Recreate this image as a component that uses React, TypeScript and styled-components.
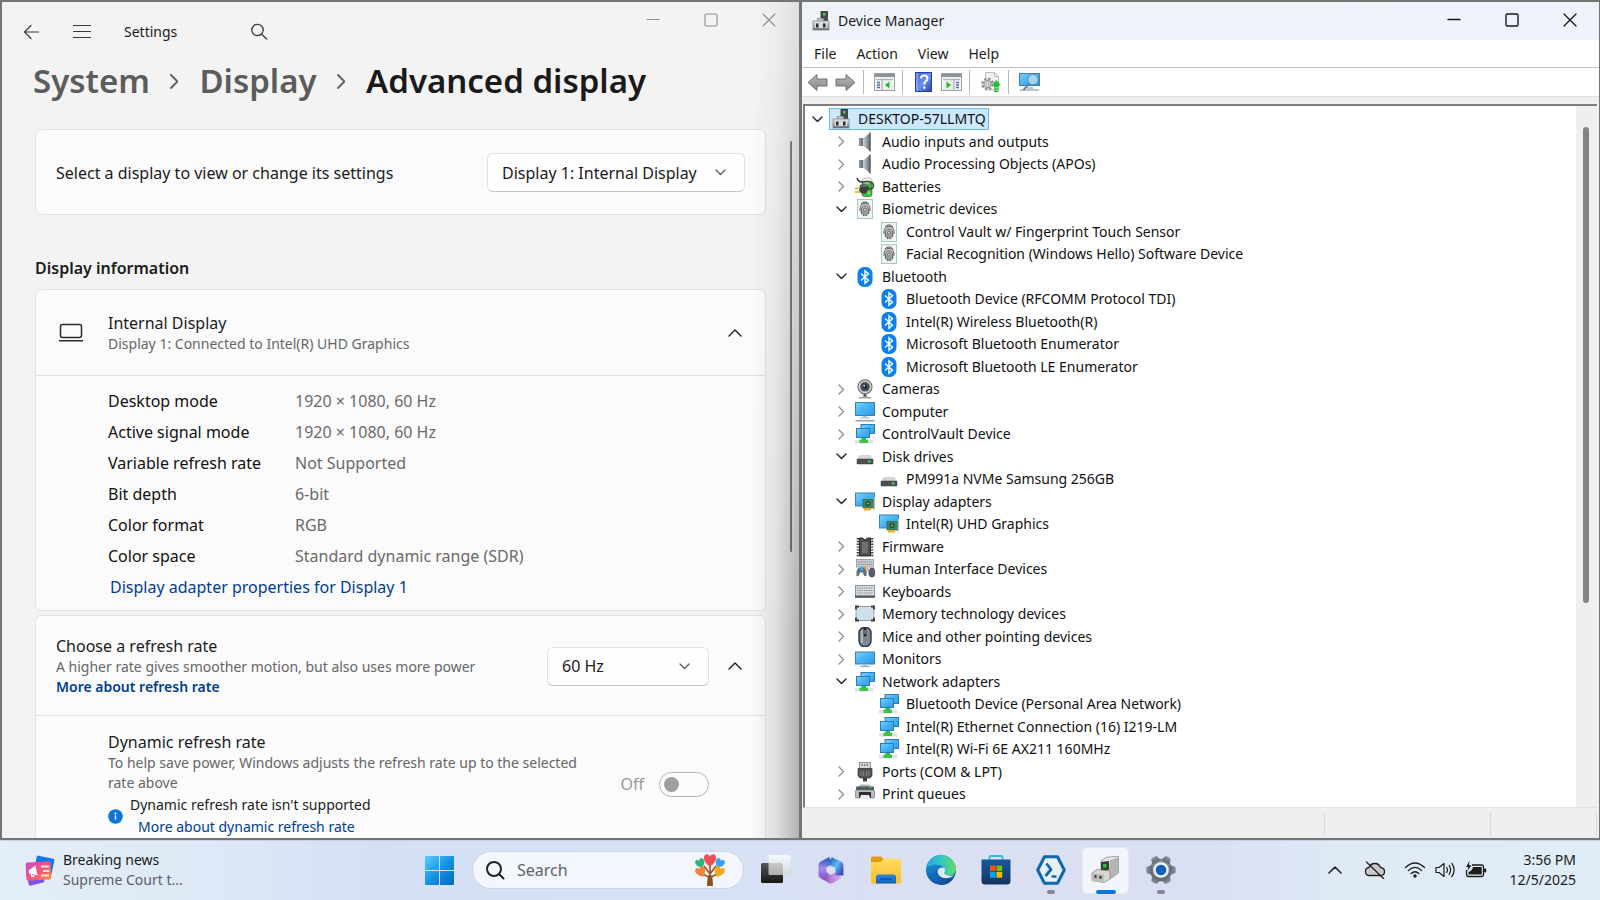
import React from 'react';
import styled, { createGlobalStyle } from 'styled-components';

const GlobalStyle = createGlobalStyle`
  *, *::before, *::after { box-sizing: border-box; }
  html, body { margin: 0; padding: 0; }
  body {
    font-family: "Noto Sans", "Open Sans", sans-serif;
    font-size: 14px;
    line-height: 20px;
    color: #1b1b1b;
  }
  button, input, select { font: inherit; color: inherit; margin: 0; padding: 0; }
  button { border: 0; background: none; }
  svg { display: block; flex: none; }
  h1, h2, p, ul, ol { margin: 0; padding: 0; font: inherit; list-style: none; }
`;

/* ---------- Desktop ---------- */

const Screen = styled.div`
  display: flex;
  flex-direction: column;
  height: 100vh;
  overflow: hidden;
`;

const Desktop = styled.main`
  flex: 1;
  min-height: 0;
  display: grid;
  grid-template-columns: minmax(0, 1fr) minmax(0, 1fr);
`;

const Window = styled.section`
  position: relative;
  display: flex;
  flex-direction: column;
  min-height: 0;
  overflow: hidden;
  border: 2px solid #747474;
  border-right-width: 1px;
`;

const SettingsWindow = styled(Window)`
  background: #f3f3f3;
  &::after {
    content: "";
    position: absolute;
    inset: 0 0 0 auto;
    width: 48px;
    pointer-events: none;
    background: linear-gradient(to left, rgba(0, 0, 0, 0.26), rgba(0, 0, 0, 0.07) 50%, transparent);
    mask-image: linear-gradient(to bottom, rgba(0, 0, 0, 0.3), #000 75%);
  }
`;

const ManagerWindow = styled(Window)`
  background: #efefef;
`;

const WindowButtons = styled.div`
  display: flex;
  align-self: flex-start;
  margin-left: auto;
`;

const WindowButton = styled.button<{ $dim?: boolean }>`
  width: 58px;
  height: 36px;
  display: grid;
  place-items: center;
  color: ${(p) => (p.$dim ? '#8e8e8e' : '#1a1a1a')};
`;

/* ---------- Settings ---------- */

const NavBar = styled.header`
  display: flex;
  align-items: center;
  height: 59px;
  padding: 0 1px 0 20px;
`;

const NavButton = styled.button`
  width: 20px;
  height: 20px;
  margin-right: 30px;
  color: #3a3a3a;
`;

const AppName = styled.span`
  margin: 0 72px 0 2px;
`;

const Breadcrumb = styled.ol`
  display: flex;
  align-items: center;
  gap: 21px;
  padding: 0 31px 28px;
  font-size: 33px;
  line-height: 40px;
  font-weight: 600;
  white-space: nowrap;
  li { display: flex; align-items: center; gap: 20px; color: #1a1a1a; }
  a { color: #5c5c5c; text-decoration: none; }
  svg { color: #5c5c5c; }
`;

const SettingsBody = styled.div`
  flex: 1;
  min-height: 0;
  display: flex;
`;

const SettingsContent = styled.div`
  flex: 1;
  min-width: 0;
  padding-left: 33px;
`;

const ThinTrack = styled.div`
  width: 33px;
  padding: 12px 0 0 24px;
`;

const ThinThumb = styled.div`
  width: 2px;
  height: 59%;
  border-radius: 1px;
  background: #828282;
`;

const Card = styled.div`
  border: 1px solid #e2e2e2;
  border-radius: 6px;
  background: #fbfbfb;
  margin-bottom: 4px;
`;

const CardHeader = styled.div<{ $height: number; $divided?: boolean }>`
  display: flex;
  align-items: center;
  min-height: ${(p) => p.$height}px;
  padding: 1px 20px 0;
  border-bottom: ${(p) => (p.$divided ? '1px solid #e0e0e0' : '0')};
`;

const SectionTitle = styled.h2`
  margin: 42px 0 10px;
  font-size: 16px;
  line-height: 22px;
  font-weight: 600;
`;

const Grow = styled.div`
  flex: 1;
  min-width: 0;
`;

const Title = styled.div`
  font-size: 16px;
  line-height: 22px;
`;

const TitleLabel = styled.label`
  display: block;
  font-size: 16px;
  line-height: 22px;
`;

const Sub = styled.p`
  color: #666;
`;

const HeaderIcon = styled.div`
  width: 52px;
  padding-left: 2px;
`;

const ExpandButton = styled.button`
  width: 20px;
  height: 20px;
  display: grid;
  place-items: center;
`;

const SelectBox = styled.div<{ $width: number; $gapRight?: number }>`
  position: relative;
  width: ${(p) => p.$width}px;
  margin-right: ${(p) => p.$gapRight ?? 0}px;
  svg {
    position: absolute;
    right: 19px;
    top: 16px;
    pointer-events: none;
    color: #5a5a5a;
  }
`;

const Select = styled.select`
  appearance: none;
  width: 100%;
  height: 39px;
  padding: 0 14px;
  font-size: 16px;
  border: 1px solid #e2e2e2;
  border-bottom-color: #c6c6c6;
  border-radius: 6px;
  background: #fefefe;
`;

const InfoBody = styled.div`
  padding: 9px 20px 7px 72px;
`;

const InfoTable = styled.table`
  border-collapse: collapse;
  font-size: 16px;
  th, td { height: 31px; padding: 0; text-align: left; font-weight: 400; }
  th { width: 187px; color: #111; }
  td { color: #6a6a6a; }
`;

const Link = styled.a<{ $strong?: boolean }>`
  color: #003e92;
  text-decoration: none;
  font-weight: ${(p) => (p.$strong ? 600 : 400)};
`;

const AdapterLink = styled(Link)`
  display: block;
  padding-left: 2px;
  font-size: 16px;
  line-height: 32px;
`;

const DynamicRow = styled.div`
  display: flex;
  align-items: center;
  gap: 24px;
  padding: 15px 56px 20px 72px;
`;

const Notice = styled.div`
  display: flex;
  align-items: center;
  gap: 7px;
  margin-top: 2px;
  ${Link} { display: block; margin-top: 2px; padding-left: 8px; }
`;

const ToggleLabel = styled.label`
  display: flex;
  align-items: center;
  gap: 15px;
  font-size: 16px;
  color: #999;
`;

const Toggle = styled.input`
  appearance: none;
  width: 50px;
  height: 25px;
  padding: 4px;
  border: 1px solid #b4b4b4;
  border-radius: 13px;
  background: #fcfcfc;
  &::before {
    content: "";
    display: block;
    width: 15px;
    height: 15px;
    border-radius: 50%;
    background: #9f9f9f;
  }
`;

/* ---------- Device Manager ---------- */

const ManagerTitle = styled.header`
  display: flex;
  align-items: center;
  gap: 7px;
  height: 38px;
  padding-left: 9px;
  background: linear-gradient(to right, #edf3f9, #eef3fb);
`;

const MenuBar = styled.nav`
  display: flex;
  height: 28px;
  padding: 0 4px 0 2px;
  background: #fff;
  border-bottom: 1px solid #bcc2c8;
  button { padding: 0 10px; line-height: 24px; }
`;

const ToolBar = styled.div`
  display: flex;
  align-items: center;
  gap: 3px;
  height: 29px;
  margin-bottom: 7px;
  padding-left: 3px;
  background: #fff;
  border-bottom: 1px solid #dedede;
`;

const ToolButton = styled.button`
  width: 25px;
  height: 24px;
  display: grid;
  place-items: center;
`;

const ToolDivider = styled.span`
  width: 1px;
  height: 24px;
  margin: 0 5px 0 2px;
  background: #b8b8b8;
`;

const TreePane = styled.div`
  flex: 1;
  min-height: 0;
  display: flex;
  overflow: hidden;
  margin: 0 2px 0 1px;
  background: #fff;
  border-left: 2px solid #7d7d7d;
  border-top: 2px solid #7d7d7d;
  border-bottom: 1px solid #e2e2e2;
`;

const Tree = styled.ul`
  flex: 1;
  padding: 2px 0 0 7px;
`;

const TreeRow = styled.li<{ $level: number }>`
  display: flex;
  align-items: center;
  height: 22px;
  padding-left: ${(p) => p.$level * 24}px;
  color: #111;
  &:nth-child(even) { height: 23px; }
`;

const Expander = styled.button`
  width: 11px;
  height: 20px;
  margin-right: 6px;
  display: grid;
  place-items: center;
`;

const ExpanderGap = styled.span`
  width: 17px;
`;

const TreeLabel = styled.span<{ $selected?: boolean }>`
  display: flex;
  align-items: center;
  gap: 7px;
  height: 22px;
  padding: 0 2px 0 1px;
  white-space: nowrap;
  border: 1px solid ${(p) => (p.$selected ? '#6cb8f2' : 'transparent')};
  background: ${(p) => (p.$selected ? '#cce8ff' : 'none')};
`;

const Gutter = styled.div`
  width: 21px;
  padding: 21px 0 0 7px;
  background: #efefef;
`;

const Thumb = styled.div`
  width: 6px;
  height: 70%;
  border-radius: 3px;
  background: #858585;
`;

const StatusBar = styled.footer`
  display: flex;
  justify-content: flex-end;
  height: 30px;
  padding: 4px 2px 2px 0;
`;

const StatusCell = styled.div<{ $width: number }>`
  width: ${(p) => p.$width}px;
  border-left: 1px solid #dadada;
`;

/* ---------- Taskbar ---------- */

const TaskBar = styled.footer`
  height: 60px;
  display: grid;
  grid-template-columns: 1fr auto 1fr;
  align-items: center;
  box-shadow: inset 0 1px #c9d1de;
  background: linear-gradient(to right, #e3eef7 0%, #dfe9f6 12%, #d5dff5 24%, #d7e1f6 45%, #dadff2 56%, #dadff1 75%, #dfeaf6 84%, #e0ecf6 100%);
`;

const NewsButton = styled.button`
  display: flex;
  align-items: center;
  gap: 8px;
  padding-left: 24px;
  text-align: left;
`;

const Muted = styled.span`
  color: #5d6066;
`;

const Lines = styled.span`
  display: flex;
  flex-direction: column;
`;

const AppStrip = styled.div`
  display: flex;
  align-items: center;
`;

const AppButton = styled.button`
  position: relative;
  width: 55px;
  height: 48px;
  display: grid;
  place-items: center;
`;

const ActiveTile = styled.span`
  display: grid;
  place-items: center;
  width: 47px;
  height: 47px;
  border-radius: 5px;
  background: #f2f5fc;
  border: 1px solid #e6e9f3;
`;

const Indicator = styled.span<{ $active?: boolean }>`
  position: absolute;
  bottom: 0;
  left: 50%;
  transform: translateX(-50%);
  width: ${(p) => (p.$active ? 20 : 8)}px;
  height: 4px;
  border-radius: 2px;
  background: ${(p) => (p.$active ? '#0a78d4' : '#85878c')};
`;

const SearchBox = styled.label`
  display: flex;
  align-items: center;
  width: 272px;
  height: 38px;
  margin: 0 4px 0 5px;
  padding: 0 18px 0 12px;
  border: 1px solid #cbd3e6;
  border-radius: 19px;
  background: #f3f7fd;
  input {
    flex: 1;
    min-width: 0;
    margin-left: 12px;
    border: 0;
    outline: 0;
    background: none;
    font-size: 16px;
  }
  input::placeholder { color: #5f6368; opacity: 1; }
`;

const Tray = styled.div`
  display: flex;
  align-items: center;
  justify-content: flex-end;
  padding-right: 24px;
`;

const TrayButton = styled.button<{ $gap: number }>`
  margin-right: ${(p) => p.$gap}px;
`;

const Clock = styled.button`
  text-align: right;
  width: 89px;
`;

/* ---------- Line glyphs ---------- */

const Chevron = ({ dir, size, stroke = 1.4, color = 'currentColor' }: { dir: 'up' | 'down' | 'right'; size: number; stroke?: number; color?: string }) => {
  const h = size / 2;
  const box = dir === 'right' ? [h + 2, size + 2] : [size + 2, h + 2];
  const pts =
    dir === 'right'
      ? `1,1 ${h + 1},${h + 1} 1,${size + 1}`
      : dir === 'down'
        ? `1,1 ${h + 1},${h + 1} ${size + 1},1`
        : `1,${h + 1} ${h + 1},1 ${size + 1},${h + 1}`;
  return (
    <svg width={box[0]} height={box[1]} viewBox={`0 0 ${box[0]} ${box[1]}`} fill="none" stroke={color} strokeWidth={stroke} strokeLinecap="round" strokeLinejoin="round">
      <polyline points={pts} />
    </svg>
  );
};

const WinGlyph = ({ kind, stroke = 1 }: { kind: 'min' | 'max' | 'close'; stroke?: number }) => (
  <svg width="14" height="14" viewBox="0 0 14 14" fill="none" stroke="currentColor" strokeWidth={stroke} strokeLinecap="round">
    {kind === 'min' && <path d="M1 6.5H13" />}
    {kind === 'max' && <rect x="1" y="1" width="12" height="12" rx="1.2" />}
    {kind === 'close' && <path d="M1 1L13 13M13 1L1 13" />}
  </svg>
);

const WindowControls = ({ dim }: { dim?: boolean }) => (
  <WindowButtons>
    {(['min', 'max', 'close'] as const).map((k) => (
      <WindowButton key={k} $dim={dim} aria-label={k}>
        <WinGlyph kind={k} stroke={dim ? 1.1 : 1.4} />
      </WindowButton>
    ))}
  </WindowButtons>
);

/* ---------- Shared gradients ---------- */

const DefsSvg = styled.svg`
  position: absolute;
  width: 0;
  height: 0;
`;

const Grad = ({ id, stops, x2 = 0, y2 = 1 }: { id: string; stops: string[]; x2?: number; y2?: number }) => (
  <linearGradient id={id} x1="0" y1="0" x2={x2} y2={y2}>
    {stops.map((s, i) => (
      <stop key={i} offset={i / (stops.length - 1)} stopColor={s} />
    ))}
  </linearGradient>
);

const Defs = () => (
  <DefsSvg aria-hidden="true">
    <defs>
      <Grad id="screen" stops={['#7fd0fb', '#45b2f3', '#2b9be6']} x2={1} />
      <Grad id="metal" stops={['#e8eaec', '#7f858b']} />
      <Grad id="cone" stops={['#d2d6da', '#5d646b']} x2={1} y2={0} />
      <Grad id="arrow" stops={['#b5b5b5', '#8a8a8a']} />
      <Grad id="helpBlue" stops={['#3d62d0', '#6f8df0', '#2748b4']} x2={1} />
      <Grad id="win" stops={['#55d3fb', '#1593e6', '#0067c4']} x2={1} />
      <Grad id="news" stops={['#c14fd6', '#fb4f77', '#ff8a3c']} x2={1} />
      <Grad id="newsBlue" stops={['#0f7be8', '#2a6ce0']} />
      <Grad id="newsPurple" stops={['#2f7fe8', '#8c49ee']} />
      <Grad id="viewDark" stops={['#555', '#161616']} />
      <Grad id="viewLight" stops={['#fff', '#d8d8d8']} />
      <Grad id="mBlue" stops={['#2a6fc4', '#5cbcf5', '#3c4fc0']} x2={1} />
      <Grad id="mViolet" stops={['#3f63c4', '#a98be8', '#8d62d6']} />
      <Grad id="mPink" stops={['#7b4aa8', '#b57fd8', '#d9a4ee']} x2={1} y2={0} />
      <Grad id="folder" stops={['#ffdd63', '#fbbc24']} />
      <Grad id="folderBlue" stops={['#2a86df', '#0c62b8']} />
      <Grad id="edgeTop" stops={['#2aa9e6', '#35c6c0', '#63dd5c']} x2={1} y2={0} />
      <Grad id="edgeSide" stops={['#1b9de2', '#0c59a4']} />
      <Grad id="edgeLow" stops={['#1278cc', '#123f86']} x2={1} />
      <Grad id="store" stops={['#155a9c', '#16345f']} />
      <Grad id="gear" stops={['#8b959e', '#5f6972']} />
      <Grad id="usb" stops={['#f2f2ef', '#a4a4a0']} />
    </defs>
  </DefsSvg>
);

/* ---------- Device icons, 20 by 20 ---------- */

type IconName =
  | 'pc' | 'speaker' | 'battery' | 'finger' | 'bluetooth' | 'camera' | 'computer' | 'network' | 'disk'
  | 'adapter' | 'firmware' | 'hid' | 'keyboard' | 'memory' | 'mouse' | 'monitor' | 'port' | 'printer' | 'cpu';

const shapes: Record<IconName, React.ReactNode> = {
  pc: (
    <>
      <rect x="10" y="0.5" width="6.5" height="11" fill="#484c4d" stroke="#303334" strokeWidth=".8" />
      <rect x="12" y="2" width="2.5" height="2.5" fill="#41d445" />
      <rect x="6.5" y="7.5" width="6" height="4" fill="#c6c8ca" stroke="#83878a" strokeWidth=".7" />
      <rect x="2" y="10" width="16" height="9" fill="url(#metal)" stroke="#84888c" strokeWidth=".8" />
      <rect x="4" y="12" width="12" height="5" fill="#d9dbdd" />
      <rect x="5" y="12.5" width="2.5" height="4" fill="#2e2e2e" />
      <rect x="12" y="12.5" width="2.5" height="4" fill="#2e2e2e" />
      <rect x="2" y="17.5" width="16" height="1.5" fill="#70757a" />
    </>
  ),
  speaker: (
    <>
      <path d="M4 6H9V14H4Z" fill="#6f777e" />
      <path d="M8 6.500L15.500 .5V19.500L8 13.500Z" fill="url(#cone)" />
      <path d="M15 .5V19.5" stroke="#4e555b" strokeWidth="1" />
      <path d="M5 6V14" stroke="#a4abb1" strokeWidth="1" />
    </>
  ),
  battery: (
    <>
      <rect x="7" y="2.5" width="10" height="17" rx="2.5" fill="#3fba3f" stroke="#2b7a2e" strokeWidth=".7" />
      <ellipse cx="12" cy="3.6" rx="5" ry="2.8" fill="#eeeeee" stroke="#9a9a9a" strokeWidth=".6" />
      <path d="M2 1Q3 5 7 5Q17 3 18.5 8Q19 12 14 12" fill="none" stroke="#3c3c3c" strokeWidth="1.5" />
      <path d="M5 8Q11 6 14 10Q14 15 9 17Q5 16 4 14Z" fill="#3e4144" />
      <path d="M6 9.5Q9 8 12 9" stroke="#8d9194" fill="none" />
      <path d="M0 11.5H5M0 15H5" stroke="#e0a92a" strokeWidth="1.6" />
      <path d="M13 14Q15 16 14 18" stroke="#8be47c" strokeWidth="1.5" fill="none" />
    </>
  ),
  finger: (
    <>
      <rect x="2.5" y=".5" width="15" height="19" fill="#f2f4f3" stroke="#a3cbbd" />
      <ellipse cx="10" cy="10" rx="5" ry="7.500" fill="#cfd1d1" />
      <g fill="none" stroke="#5c6061" strokeWidth="1">
        <path d="M6 5Q10 .8 14 5" />
        <path d="M5 12Q4.500 4.500 10 4.500Q15.500 4.500 15 12" />
        <path d="M6.700 15Q5.500 7 10 7Q14.500 7 13.500 15" />
        <path d="M8.500 17Q7 9 10 9Q13 9 11.700 17" />
        <path d="M10 11V17" />
      </g>
    </>
  ),
  bluetooth: (
    <>
      <rect x="2.500" y="0" width="15" height="20" rx="6.500" fill="#0a80f2" />
      <path d="M6 6.500L13.500 13.200L10 16.300V3.700L13.500 6.800L6 13.500" fill="none" stroke="#fff" strokeWidth="1.400" />
    </>
  ),
  camera: (
    <>
      <path d="M10 15V18" stroke="#4c4f52" strokeWidth="3" />
      <path d="M4 19Q10 16.500 16 19Z" fill="#d6d8da" stroke="#8b8e91" strokeWidth=".8" />
      <circle cx="10" cy="7.800" r="7" fill="#d4d6d8" stroke="#77797b" strokeWidth="1.200" />
      <circle cx="10" cy="7.800" r="4.800" fill="#4a4d51" />
      <circle cx="10" cy="7.800" r="2.300" fill="#1f2b4a" />
      <circle cx="9.200" cy="6.800" r="1" fill="#b8c9ec" />
    </>
  ),
  computer: (
    <>
      <rect x=".5" y=".5" width="19" height="13" fill="url(#screen)" stroke="#3981b0" />
      <path d="M8 14H12V15.500H8Z" fill="#b7c3cc" />
      <path d="M5 16H15" stroke="#9fb0bd" strokeWidth="1" />
      <path d="M.5 18.800H19.500" stroke="#8da2b5" strokeWidth="1.500" />
    </>
  ),
  network: (
    <>
      <rect x="6" y=".5" width="13.500" height="9" fill="url(#screen)" stroke="#2c7cb5" />
      <rect x="1.500" y="4.500" width="13" height="9" fill="url(#screen)" stroke="#2c7cb5" />
      <path d="M6.500 14H11V16H6.500Z" fill="#36b145" />
      <path d="M0 16H18V19.500H0Z" fill="#dfe1e2" />
      <path d="M4.500 15.500H13V19H4.500Z" fill="#3dc24a" />
    </>
  ),
  disk: (
    <>
      <path d="M4.500 8H15.500L18 12.500H2Z" fill="#d5d7d8" />
      <rect x="2" y="12" width="16" height="5" rx=".6" fill="#4c5052" stroke="#383b3c" strokeWidth=".5" />
      <rect x="13" y="13.500" width="2.500" height="2" fill="#3fe044" />
    </>
  ),
  adapter: (
    <>
      <rect x=".5" y="1" width="19" height="13" fill="url(#screen)" stroke="#3981b0" />
      <rect x="8" y="7.500" width="11" height="8.500" fill="#3a8a5a" stroke="#236343" strokeWidth=".7" />
      <circle cx="13" cy="11.500" r="2.600" fill="#2b4a45" />
      <circle cx="13" cy="11.500" r="1" fill="#9ab5a8" />
      <path d="M9 16H16V18.500H9Z" fill="#f0a92a" />
      <path d="M19.300 5V18.500" stroke="#bfc3c6" strokeWidth="1.200" />
    </>
  ),
  firmware: (
    <>
      <path d="M4.500 1H7.500L10 3L12.500 1H15.500V19H4.500Z" fill="#4c4f52" stroke="#2a2c2e" />
      <path d="M7 5H13V16H7Z" fill="#6d7174" />
      <path d="M2.800 1V20M17.200 1V20" stroke="#34373a" strokeWidth="2.200" strokeDasharray="1.400 1.400" />
    </>
  ),
  hid: (
    <>
      <rect x="1.500" y=".5" width="17" height="7.500" fill="#c9ced2" stroke="#8d949a" strokeWidth=".8" />
      <path d="M3 3H17M3 5.500H17" stroke="#7c848b" strokeWidth="1" strokeDasharray="1.400 .8" />
      <path d="M1.500 17Q.5 9 5 8.500H9Q12.500 9 11.500 17Q8.500 18 8 13.500H5Q4 18.500 1.500 17Z" fill="#656d75" />
      <circle cx="6.500" cy="10" r="2" fill="#2fa1e8" />
      <path d="M9.500 8L11 10.500" stroke="#e5862c" strokeWidth="2" />
      <path d="M12.500 8.500L14.500 17" stroke="#aeb4b9" strokeWidth="1.600" />
      <rect x="14.500" y="9" width="5" height="9" rx="2.500" fill="#59616a" stroke="#343a40" strokeWidth=".7" />
    </>
  ),
  keyboard: (
    <>
      <rect x=".5" y="3.500" width="19" height="12" fill="#d5d9dc" stroke="#8f979d" />
      <path d="M2 6H18M2 8.500H18M2 11H18" stroke="#8f989f" strokeWidth="1.100" strokeDasharray="1.500 .8" />
      <path d="M0 14.500H20" stroke="#4e565c" strokeWidth="2" />
    </>
  ),
  memory: (
    <>
      <rect x="1" y="2.500" width="18" height="14" fill="#cfdfe9" stroke="#8e9ba4" strokeWidth=".8" />
      <path d="M1 5.500V2.500H4M16 2.500H19V5.500M19 13.500V16.500H16M4 16.500H1V13.500" fill="none" stroke="#363b40" strokeWidth="1.800" />
      <path d="M5 16.500H15M5 2.500H15" stroke="#818d96" strokeWidth="1" strokeDasharray="1 1" />
    </>
  ),
  mouse: (
    <>
      <rect x="4" y=".5" width="12" height="19" rx="5.500" fill="#7c8896" stroke="#2f353b" strokeWidth="1.400" />
      <rect x="6" y="3" width="2" height="13" rx="1" fill="#a9b4c0" />
      <path d="M10 1V9.500" stroke="#22272c" strokeWidth="2.600" />
      <path d="M10 3V7" stroke="#aab3bb" strokeWidth="1" />
    </>
  ),
  monitor: (
    <>
      <rect x=".5" y="3" width="19" height="12" fill="url(#screen)" stroke="#3981b0" />
      <path d="M8 15.500H12V17H8Z" fill="#b7c3cc" />
      <path d="M5 17.500H15" stroke="#9fb0bd" strokeWidth="1.200" />
    </>
  ),
  port: (
    <>
      <rect x="4.500" y=".5" width="11" height="6" fill="#d4d6d8" stroke="#85898c" strokeWidth=".9" />
      <path d="M6.500 3H13.500" stroke="#6e7275" strokeWidth="1.600" strokeDasharray="1.500 1" />
      <path d="M3 6.500H17V14L15 16H5L3 14Z" fill="#54575a" stroke="#35383a" strokeWidth=".7" />
      <path d="M6 9V14M8.500 9V14M11.500 9V14M14 9V14" stroke="#7d8184" strokeWidth="1" />
      <path d="M8 16H12V19.500H8Z" fill="#3e4143" />
    </>
  ),
  printer: (
    <>
      <path d="M4 3L5.500 1H14.500L16 3Z" fill="#c6cacd" stroke="#7e8589" strokeWidth=".6" />
      <rect x="1" y="2.500" width="18" height="4" rx="1" fill="#4f5558" />
      <rect x=".5" y="6" width="19" height="8" rx="1" fill="#b6bcc0" stroke="#747b80" strokeWidth=".7" />
      <rect x="4" y="8" width="12" height="6" fill="#2c2f31" />
      <path d="M6 11H14L15.500 15H4.500Z" fill="#e9ebec" />
      <rect x="14" y="2.500" width="2.500" height="1.500" fill="#3fd05a" />
    </>
  ),
  cpu: (
    <>
      <rect x="1" y="0" width="18" height="19" fill="#7d8434" />
      <rect x="4" y="4" width="12" height="12" fill="#c9cbc8" />
    </>
  ),
};

const DeviceIcon = ({ name }: { name: IconName }) => (
  <svg width="20" height="20" viewBox="0 0 20 20" aria-hidden="true">{shapes[name]}</svg>
);

/* ---------- Data ---------- */

type Device = { level: number; icon: IconName; name: string; open?: boolean };

const group = (icon: IconName, name: string, children?: string[]): Device[] => [
  { level: 1, icon, name, open: !!children },
  ...(children ?? []).map((c) => ({ level: 2, icon, name: c })),
];

const devices: Device[] = [
  { level: 0, icon: 'pc', name: 'DESKTOP-57LLMTQ', open: true },
  ...group('speaker', 'Audio inputs and outputs'),
  ...group('speaker', 'Audio Processing Objects (APOs)'),
  ...group('battery', 'Batteries'),
  ...group('finger', 'Biometric devices', ['Control Vault w/ Fingerprint Touch Sensor', 'Facial Recognition (Windows Hello) Software Device']),
  ...group('bluetooth', 'Bluetooth', ['Bluetooth Device (RFCOMM Protocol TDI)', 'Intel(R) Wireless Bluetooth(R)', 'Microsoft Bluetooth Enumerator', 'Microsoft Bluetooth LE Enumerator']),
  ...group('camera', 'Cameras'),
  ...group('computer', 'Computer'),
  ...group('network', 'ControlVault Device'),
  ...group('disk', 'Disk drives', ['PM991a NVMe Samsung 256GB']),
  ...group('adapter', 'Display adapters', ['Intel(R) UHD Graphics']),
  ...group('firmware', 'Firmware'),
  ...group('hid', 'Human Interface Devices'),
  ...group('keyboard', 'Keyboards'),
  ...group('memory', 'Memory technology devices'),
  ...group('mouse', 'Mice and other pointing devices'),
  ...group('monitor', 'Monitors'),
  ...group('network', 'Network adapters', ['Bluetooth Device (Personal Area Network)', 'Intel(R) Ethernet Connection (16) I219-LM', 'Intel(R) Wi-Fi 6E AX211 160MHz']),
  ...group('port', 'Ports (COM & LPT)'),
  ...group('printer', 'Print queues'),
];

const displayInfo: [string, string][] = [
  ['Desktop mode', '1920 × 1080, 60 Hz'],
  ['Active signal mode', '1920 × 1080, 60 Hz'],
  ['Variable refresh rate', 'Not Supported'],
  ['Bit depth', '6-bit'],
  ['Color format', 'RGB'],
  ['Color space', 'Standard dynamic range (SDR)'],
];

/* ---------- Settings window ---------- */

const Settings = () => (
  <SettingsWindow aria-label="Settings">
    <NavBar>
      <NavButton aria-label="Back">
        <svg width="20" height="20" viewBox="0 0 20 20" fill="none" stroke="currentColor" strokeWidth="1.2" strokeLinecap="round" strokeLinejoin="round">
          <path d="M2.500 10H16.500M9 3.500L2.500 10L9 16.500" />
        </svg>
      </NavButton>
      <NavButton aria-label="Navigation">
        <svg width="20" height="20" viewBox="0 0 20 20" stroke="currentColor" strokeWidth="1.2" strokeLinecap="round">
          <path d="M1.500 3.500H18.500M1.500 9.500H18.500M1.500 15.500H18.500" />
        </svg>
      </NavButton>
      <AppName>Settings</AppName>
      <NavButton aria-label="Search settings">
        <svg width="20" height="20" viewBox="0 0 20 20" fill="none" stroke="currentColor" strokeWidth="1.3" strokeLinecap="round">
          <circle cx="8.500" cy="8" r="5.700" />
          <path d="M12.700 12.200L17.500 17" />
        </svg>
      </NavButton>
      <WindowControls dim />
    </NavBar>
    <Breadcrumb>
      <li><a href="#system">System</a><Chevron dir="right" size={13} stroke={1.8} /></li>
      <li><a href="#display">Display</a><Chevron dir="right" size={13} stroke={1.8} /></li>
      <li aria-current="page">Advanced display</li>
    </Breadcrumb>
    <SettingsBody>
      <SettingsContent>
        <Card>
          <CardHeader $height={84}>
            <Grow><TitleLabel htmlFor="display">Select a display to view or change its settings</TitleLabel></Grow>
            <SelectBox $width={258}>
              <Select id="display"><option>Display 1: Internal Display</option></Select>
              <Chevron dir="down" size={9} stroke={1.3} />
            </SelectBox>
          </CardHeader>
        </Card>
        <SectionTitle>Display information</SectionTitle>
        <Card>
          <CardHeader $height={86} $divided>
            <HeaderIcon>
              <svg width="26" height="20" viewBox="0 0 26 20" fill="none" stroke="#2a2a2a" strokeWidth="1.5" strokeLinecap="round">
                <rect x="2.500" y="1.500" width="21" height="13" rx="2" />
                <path d="M1.500 17.800H24.500" />
              </svg>
            </HeaderIcon>
            <Grow>
              <Title>Internal Display</Title>
              <Sub>Display 1: Connected to Intel(R) UHD Graphics</Sub>
            </Grow>
            <ExpandButton aria-label="Collapse display details"><Chevron dir="up" size={12} /></ExpandButton>
          </CardHeader>
          <InfoBody>
            <InfoTable>
              <tbody>
                {displayInfo.map(([k, v]) => (
                  <tr key={k}><th scope="row">{k}</th><td>{v}</td></tr>
                ))}
              </tbody>
            </InfoTable>
            <AdapterLink href="#adapter">Display adapter properties for Display 1</AdapterLink>
          </InfoBody>
        </Card>
        <Card>
          <CardHeader $height={100} $divided>
            <Grow>
              <TitleLabel htmlFor="rate">Choose a refresh rate</TitleLabel>
              <Sub>A higher rate gives smoother motion, but also uses more power</Sub>
              <Link href="#rate" $strong>More about refresh rate</Link>
            </Grow>
            <SelectBox $width={162} $gapRight={16}>
              <Select id="rate"><option>60 Hz</option></Select>
              <Chevron dir="down" size={9} stroke={1.3} />
            </SelectBox>
            <ExpandButton aria-label="Collapse refresh rate"><Chevron dir="up" size={12} /></ExpandButton>
          </CardHeader>
          <DynamicRow>
            <Grow>
              <Title>Dynamic refresh rate</Title>
              <Sub>To help save power, Windows adjusts the refresh rate up to the selected rate above</Sub>
              <Notice>
                <svg width="15" height="15" viewBox="0 0 15 15">
                  <circle cx="7.500" cy="7.500" r="7.300" fill="#0d78d4" />
                  <path d="M7.500 6.500V10.500" stroke="#fff" strokeWidth="1.400" />
                  <circle cx="7.500" cy="4.500" r=".9" fill="#fff" />
                </svg>
                <div>
                  <p>Dynamic refresh rate isn't supported</p>
                  <Link href="#dynamic">More about dynamic refresh rate</Link>
                </div>
              </Notice>
            </Grow>
            <ToggleLabel>Off<Toggle type="checkbox" disabled aria-label="Dynamic refresh rate" /></ToggleLabel>
          </DynamicRow>
        </Card>
      </SettingsContent>
      <ThinTrack><ThinThumb /></ThinTrack>
    </SettingsBody>
  </SettingsWindow>
);

/* ---------- Device Manager window ---------- */

const PanelIcon = ({ flip }: { flip?: boolean }) => (
  <svg width="21" height="18" viewBox="0 0 21 18">
    <rect x=".5" y=".5" width="20" height="17" fill="#f4f4f2" stroke="#9b9fa2" />
    <rect x="1" y="1" width="19" height="3" fill="#8a9197" />
    <path d="M2 6.500H19" stroke="#b4b9bd" strokeWidth="1.500" />
    <g transform={flip ? 'translate(21 0) scale(-1 1)' : undefined}>
      <path d="M3 9.500H6M3 12H6M3 14.500H6" stroke="#3d72b4" strokeWidth="1.300" />
      <path d="M8 6V17.500" stroke="#9b9fa2" />
      <rect x="9" y="8" width="10" height="9" fill="#e9f3e6" />
    </g>
    <path d={flip ? 'M5.500 8.500V15.500L10 12Z' : 'M15.500 8.500V15.500L11 12Z'} fill="#2db52d" />
  </svg>
);

const DeviceManager = () => (
  <ManagerWindow aria-label="Device Manager">
    <ManagerTitle>
      <DeviceIcon name="pc" />
      <h1>Device Manager</h1>
      <WindowControls />
    </ManagerTitle>
    <MenuBar>
      {['File', 'Action', 'View', 'Help'].map((m) => <button key={m}>{m}</button>)}
    </MenuBar>
    <ToolBar>
      <ToolButton aria-label="Back">
        <svg width="21" height="19" viewBox="0 0 21 19"><path d="M1 9.500L10 1.500V6H20V13H10V17.500Z" fill="url(#arrow)" stroke="#737373" /></svg>
      </ToolButton>
      <ToolButton aria-label="Forward">
        <svg width="21" height="19" viewBox="0 0 21 19"><path d="M20 9.500L11 1.500V6H1V13H11V17.500Z" fill="url(#arrow)" stroke="#737373" /></svg>
      </ToolButton>
      <ToolDivider />
      <ToolButton aria-label="Show console tree"><PanelIcon /></ToolButton>
      <ToolDivider />
      <ToolButton aria-label="Help">
        <svg width="17" height="20" viewBox="0 0 17 20">
          <rect x=".5" y=".5" width="16" height="19" fill="url(#helpBlue)" stroke="#2340a0" />
          <path d="M2 1V19" stroke="#9fb3f5" strokeWidth="1.200" />
          <path d="M6 6.500Q6 3.500 9 3.500Q12.500 3.500 12.500 6.500Q12.500 8.300 10.500 9.500Q9.300 10.300 9.300 12.500" fill="none" stroke="#fff" strokeWidth="2" />
          <circle cx="9.300" cy="15.600" r="1.300" fill="#fff" />
        </svg>
      </ToolButton>
      <ToolButton aria-label="Show action pane"><PanelIcon flip /></ToolButton>
      <ToolDivider />
      <ToolButton aria-label="Update drivers">
        <svg width="20" height="20" viewBox="0 0 20 20">
          <path d="M4.500 .5H13.500L17.500 4.500V18H4.500Z" fill="#f1f1ef" stroke="#bdbdbb" />
          <path d="M13.500 .5V4.500H17.500" fill="none" stroke="#bdbdbb" />
          <circle cx="6.500" cy="12" r="5.200" fill="none" stroke="#8c9093" strokeWidth="2.200" strokeDasharray="2.400 1.680" />
          <circle cx="6.500" cy="12" r="3.600" fill="#dddfe0" stroke="#9a9ea1" strokeWidth="1.500" />
          <circle cx="6.500" cy="12" r="1.300" fill="#fff" stroke="#85898c" strokeWidth=".7" />
          <path d="M15.300 8L20 13.500H17.500V15.500H13V13.500H10.700Z" fill="#23c12f" />
          <path d="M13 17H17.500M13 19.300H17.500" stroke="#23c12f" strokeWidth="1.400" />
        </svg>
      </ToolButton>
      <ToolDivider />
      <ToolButton aria-label="Scan for hardware changes">
        <svg width="21" height="20" viewBox="0 0 21 20">
          <rect x=".5" y="1.500" width="20" height="12" fill="url(#screen)" stroke="#3981b0" />
          <path d="M1 18H20M8 16H14" stroke="#9cb2c4" strokeWidth="1.300" />
          <circle cx="14" cy="7.500" r="5.200" fill="#9ddafb" stroke="#7398b4" strokeWidth="1.300" />
          <path d="M10.200 11.500L4.500 17.800" stroke="#5e84a6" strokeWidth="2" />
        </svg>
      </ToolButton>
    </ToolBar>
    <TreePane>
      <Tree role="tree">
        {devices.map((d) => (
          <TreeRow key={d.name} $level={d.level} role="treeitem" aria-level={d.level + 1}>
            {d.level < 2 ? (
              <Expander aria-label={d.open ? 'Collapse' : 'Expand'}>
                <Chevron dir={d.open ? 'down' : 'right'} size={9} stroke={d.open ? 1.6 : 1.4} color={d.open ? '#333' : '#909090'} />
              </Expander>
            ) : (
              <ExpanderGap />
            )}
            <TreeLabel $selected={d.level === 0}><DeviceIcon name={d.icon} />{d.name}</TreeLabel>
          </TreeRow>
        ))}
        <TreeRow $level={1} role="treeitem" aria-level={2} aria-label="Processors">
          <ExpanderGap />
          <TreeLabel><DeviceIcon name="cpu" /></TreeLabel>
        </TreeRow>
      </Tree>
      <Gutter><Thumb /></Gutter>
    </TreePane>
    <StatusBar>
      <StatusCell $width={166} />
      <StatusCell $width={106} />
      <StatusCell $width={1} />
    </StatusBar>
  </ManagerWindow>
);

/* ---------- Taskbar icons ---------- */

const NewsIcon = () => (
  <svg width="31" height="31" viewBox="0 0 31 31">
    <rect x="3" y="14" width="16" height="15" rx="1.500" transform="rotate(-14 12 21)" fill="url(#newsPurple)" />
    <rect x="11" y="2" width="18" height="17" rx="1.500" transform="rotate(12 20 11)" fill="url(#newsBlue)" />
    <rect x="2" y="7" width="25" height="18" rx="2" transform="rotate(-3 15 16)" fill="url(#news)" />
    <path d="M4.500 15.500L11.500 10.500L13.500 20.500L5 18.500Z" fill="#fff" />
    <path d="M7 18.500L8 21.500L10.500 21" stroke="#fff" strokeWidth="1.500" fill="none" />
    <path d="M17 11.500H25M19 16H25.500M17 20.500H25" stroke="#ffe9e4" strokeWidth="1.800" />
  </svg>
);

const Heart = ({ x, y, s, r = 0, fill }: { x: number; y: number; s: number; r?: number; fill: string }) => (
  <path transform={`translate(${x} ${y}) rotate(${r}) scale(${s})`} d="M0 5C-7 0 -5 -5 -2.500 -5Q-.8 -5 0 -3.200Q.8 -5 2.500 -5C5 -5 7 0 0 5Z" fill={fill} />
);

const HeartTree = () => (
  <svg width="30" height="32" viewBox="0 0 30 32">
    <path d="M13 30L13.500 23L6 19M17 30L16.500 23L24 19M15 24V11M15 20L9 12M15 20L21 12" fill="none" stroke="#9a5a26" strokeWidth="1.700" />
    <path d="M12 32L13.500 21H16.500L18 32Z" fill="#8c4f22" />
    <Heart x={15} y={6.5} s={1.25} fill="#ec5157" />
    <Heart x={5.5} y={9.5} s={0.95} r={-25} fill="#2cb67b" />
    <Heart x={24.5} y={9.5} s={0.95} r={25} fill="#3d9cf2" />
    <Heart x={6} y={18} s={1.05} r={-25} fill="#f5833d" />
    <Heart x={24} y={18} s={1.05} r={25} fill="#f2aa1d" />
  </svg>
);

const StartIcon = () => (
  <svg width="29" height="29" viewBox="0 0 29 29" fill="url(#win)">
    <path d="M0 1Q0 0 1 0H14V14H0ZM15 0H28Q29 0 29 1V14H15ZM0 15H14V29H1Q0 29 0 28ZM15 15H29V28Q29 29 28 29H15Z" />
  </svg>
);

const TaskViewIcon = () => (
  <svg width="30" height="30" viewBox="0 0 30 30">
    <rect x="0" y="8" width="22" height="20" rx="1.500" fill="url(#viewDark)" />
    <rect x="7.500" y="0" width="22" height="20" rx="1.500" fill="url(#viewLight)" opacity=".75" />
  </svg>
);

const M365Icon = () => (
  <svg width="28" height="30" viewBox="0 0 28 30" fill="none" strokeWidth="8" strokeLinejoin="round">
    <path d="M22.200 19.800L14 24.500L5.800 19.800" stroke="url(#mPink)" />
    <path d="M8 21L5.500 19.600V10.200L14 5.500" stroke="url(#mViolet)" />
    <path d="M13 5.800L22.400 10.200V20.500" stroke="url(#mBlue)" />
  </svg>
);

const ExplorerIcon = () => (
  <svg width="30" height="28" viewBox="0 0 30 28">
    <path d="M0 2Q0 .5 1.500 .5H10L13 3.500V8H0Z" fill="#dd9a12" />
    <path d="M0 6H9.500L13 2.500H28.500Q30 2.500 30 4V26Q30 27.500 28.500 27.500H1.500Q0 27.500 0 26Z" fill="url(#folder)" />
    <path d="M5 27.500V21Q5 18.500 7.500 18.500H22.500Q25 18.500 25 21V27.500Z" fill="url(#folderBlue)" />
    <path d="M10 23H20" stroke="#0a4f98" strokeWidth="1.500" strokeLinecap="round" />
  </svg>
);

const EdgeIcon = () => (
  <svg width="30" height="30" viewBox="0 0 30 30">
    <circle cx="15" cy="15" r="15" fill="url(#edgeSide)" />
    <path d="M1.500 9Q6 0 15.500 0Q28 1 30 13.500Q30 20 23 20.500Q17.500 20.500 18.500 17.500Q20 15 18 12.500Q15 9.500 9 9.500Q4 10 1.500 12Z" fill="url(#edgeTop)" />
    <path d="M10.500 14Q14 10 18 12.500Q13.500 12.500 13.500 17Q14.500 23.500 22 23.500Q26 23.500 28.500 21.500Q24 30 15 30Q8 28 8 20.500Q8 16.500 10.500 14Z" fill="url(#edgeLow)" />
    <path d="M18 12.500Q11.500 12 11.600 17Q12.500 22 18 23Q23 23.800 28.500 20.500Q24 21 20.500 20Q17.500 19 18.700 17Q20 15 18 12.500Z" fill="#dfe7f7" />
  </svg>
);

const StoreIcon = () => (
  <svg width="30" height="30" viewBox="0 0 30 30">
    <path d="M8.500 5V2.500Q8.500 1 10 1H20Q21.500 1 21.500 2.500V5" fill="none" stroke="#2fb8f0" strokeWidth="1.800" />
    <path d="M.5 4.500H29.500V26Q29.500 29.500 26 29.500H4Q.5 29.500 .5 26Z" fill="url(#store)" />
    <rect x="9" y="10.500" width="5.700" height="5.700" fill="#f25022" />
    <rect x="15.500" y="10.500" width="5.700" height="5.700" fill="#7fba00" />
    <rect x="9" y="17" width="5.700" height="5.700" fill="#00a4ef" />
    <rect x="15.500" y="17" width="5.700" height="5.700" fill="#ffb900" />
  </svg>
);

const ShellIcon = () => (
  <svg width="30" height="30" viewBox="0 0 30 30" fill="none" strokeLinejoin="round">
    <path d="M8.500 1.700H21.500L28.300 15L21.500 28.300H8.500L1.700 15Z" fill="#e9eef8" stroke="#0c69b0" strokeWidth="3" />
    <path d="M10.500 8.500L15 14.500L9.500 21" stroke="#0c69b0" strokeWidth="2.800" />
    <path d="M15.500 21.500H20.500" stroke="#0c69b0" strokeWidth="2.400" />
  </svg>
);

const UsbIcon = () => (
  <svg width="30" height="28" viewBox="0 0 30 28">
    <path d="M10 5L15 1.500L27.500 0V17L19 23L10 18Z" fill="url(#usb)" stroke="#8b8b88" strokeWidth=".8" />
    <path d="M19 4.500L27.500 1V17L19 23Z" fill="#b4b4b0" />
    <path d="M10 6L18 5V14L10 16Z" fill="#3a3d3a" />
    <rect x="12" y="8" width="3.500" height="3.500" fill="#2fc53a" />
    <path d="M1 17L6 13.500L19 15V23L13 26.500L1 24.500Z" fill="#d6d6d3" stroke="#8b8b88" strokeWidth=".8" />
    <path d="M1 17L13 18.500V26.500L1 24.500Z" fill="#bdbdba" />
    <path d="M3.500 19L5.500 19.300V22L3.500 21.700ZM8.500 19.800L10.500 20V23L8.500 22.600Z" fill="#333" />
  </svg>
);

const GearIcon = () => (
  <svg width="30" height="30" viewBox="0 0 30 30">
    <g fill="url(#gear)">
      <circle cx="15" cy="15" r="11.200" />
      {[30, 90, 150, 210, 270, 330].map((a) => (
        <path key={a} d="M10.300 6L11.800 .8Q15 -.5 18.200 .8L19.700 6Z" transform={`rotate(${a} 15 15)`} />
      ))}
    </g>
    <circle cx="15" cy="15" r="7.800" fill="#eef1f5" />
    <circle cx="15" cy="15" r="5.300" fill="#0f62b8" />
  </svg>
);

const CloudOff = () => (
  <svg width="22" height="18" viewBox="0 0 22 18" fill="none" stroke="#222" strokeWidth="1.300" strokeLinecap="round">
    <path d="M5.500 14.500Q1.500 14.500 1.500 10.500Q1.500 7 5 6.500Q6.500 2.500 11 2.500Q15 2.500 16.500 6.500Q20.500 7 20.500 10.500Q20.500 14.500 16.500 14.500Z" fill="#c9cacc" />
    <path d="M2.500 1L19.500 17.500" />
  </svg>
);

const WifiIcon = () => (
  <svg width="22" height="18" viewBox="0 0 22 18" fill="none" stroke="#1c1c1c" strokeWidth="1.300" strokeLinecap="round">
    <path d="M1.500 6.500Q11 -2.500 20.500 6.500M4.300 9.600Q11 3.200 17.700 9.600M7.200 12.500Q11 9 14.800 12.500" />
    <circle cx="11" cy="15" r="1.700" fill="#1c1c1c" stroke="none" />
  </svg>
);

const VolumeIcon = () => (
  <svg width="21" height="18" viewBox="0 0 21 18" fill="none" stroke="#1c1c1c" strokeWidth="1.200" strokeLinecap="round" strokeLinejoin="round">
    <path d="M1 6.500H4L9 2.500V15.500L4 11.500H1Z" />
    <path d="M11.700 6.500Q13.200 9 11.700 11.500M14.200 4.500Q17 9 14.200 13.500M16.800 2.300Q21.500 9 16.800 15.700" />
  </svg>
);

const BatteryIcon = () => (
  <svg width="22" height="18" viewBox="0 0 22 18">
    <path d="M7 4H16.500Q18.500 4 18.500 6V13Q18.500 15.500 16.500 15.500H3.500Q1.500 15.500 1.500 13V9" fill="none" stroke="#1c1c1c" strokeWidth="1.300" />
    <path d="M8 6H16.700V13.600H3.500V11Q7 10 8 6Z" fill="#1c1c1c" />
    <rect x="19" y="7.500" width="2.200" height="4" rx="1" fill="#1c1c1c" />
    <path d="M4.500 0L1 6H3.300L2.500 10L6.500 4.300H4Z" fill="#1c1c1c" />
  </svg>
);

const apps: { name: string; icon: React.ReactNode; state?: 'running' | 'active' }[] = [
  { name: 'Task view', icon: <TaskViewIcon /> },
  { name: 'Microsoft 365', icon: <M365Icon /> },
  { name: 'File Explorer', icon: <ExplorerIcon /> },
  { name: 'Edge', icon: <EdgeIcon /> },
  { name: 'Store', icon: <StoreIcon /> },
  { name: 'PowerShell', icon: <ShellIcon />, state: 'running' },
  { name: 'Device Manager', icon: <UsbIcon />, state: 'active' },
  { name: 'Settings', icon: <GearIcon />, state: 'running' },
];

const Taskbar = () => (
  <TaskBar>
    <NewsButton>
      <NewsIcon />
      <Lines>
        <span>Breaking news</span>
        <Muted>Supreme Court t...</Muted>
      </Lines>
    </NewsButton>
    <AppStrip>
      <AppButton aria-label="Start"><StartIcon /></AppButton>
      <SearchBox>
        <svg width="20" height="20" viewBox="0 0 20 20" fill="none" stroke="#222" strokeWidth="2" strokeLinecap="round">
          <circle cx="9" cy="9" r="7" />
          <path d="M14 14L18.500 18.500" />
        </svg>
        <input type="text" placeholder="Search" aria-label="Search" />
        <HeartTree />
      </SearchBox>
      {apps.map((a) => (
        <AppButton key={a.name} aria-label={a.name}>
          {a.state === 'active' ? <ActiveTile>{a.icon}</ActiveTile> : a.icon}
          {a.state && <Indicator $active={a.state === 'active'} />}
        </AppButton>
      ))}
    </AppStrip>
    <Tray>
      <TrayButton $gap={22} aria-label="Show hidden icons"><Chevron dir="up" size={12} stroke={1.6} color="#222" /></TrayButton>
      <TrayButton $gap={18} aria-label="OneDrive"><CloudOff /></TrayButton>
      <TrayButton $gap={9} aria-label="Network"><WifiIcon /></TrayButton>
      <TrayButton $gap={9} aria-label="Volume"><VolumeIcon /></TrayButton>
      <TrayButton $gap={0} aria-label="Battery"><BatteryIcon /></TrayButton>
      <Clock><Lines><span>3:56 PM</span><span>12/5/2025</span></Lines></Clock>
    </Tray>
  </TaskBar>
);

export default function App() {
  return (
    <>
      <GlobalStyle />
      <Defs />
      <Screen>
        <Desktop>
          <Settings />
          <DeviceManager />
        </Desktop>
        <Taskbar />
      </Screen>
    </>
  );
}
